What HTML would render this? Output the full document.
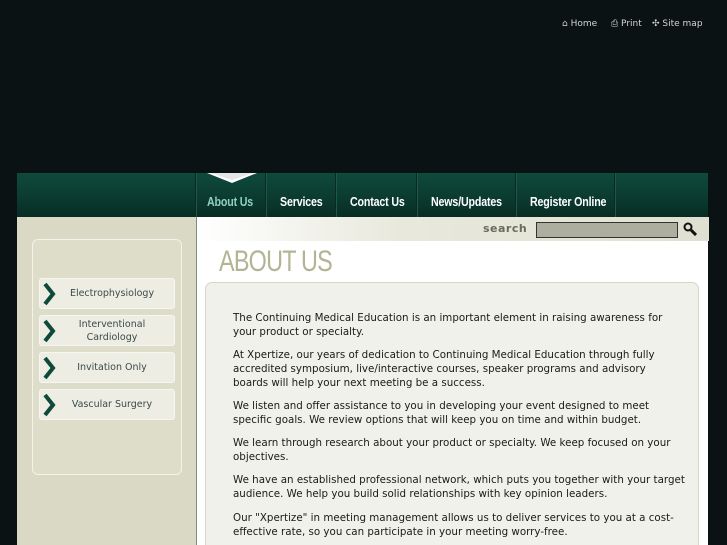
<!DOCTYPE html>
<html><head><style>
*{margin:0;padding:0;box-sizing:border-box}
html,body{width:727px;height:545px;overflow:hidden}
body{background:#0b1213;position:relative;font-family:"DejaVu Sans",sans-serif}
.top{position:absolute;top:19px;font-size:9px;color:#cfd6d4}
.nav{position:absolute;left:17px;top:173px;width:691px;height:44px;background:linear-gradient(#0f4a3c,#0b3a2f 60%,#082c24)}
.nav a{position:absolute;top:21px;font-family:"Liberation Sans",sans-serif;font-weight:bold;font-size:13px;color:#fff;letter-spacing:-0.2px;transform:scaleX(0.82);transform-origin:left}
.sep{position:absolute;top:0;width:1px;height:44px;background:#0a2a22;box-shadow:1px 0 0 #1d5848}
.side{position:absolute;left:17px;top:217px;width:179px;height:328px;background:#d9d9c6}
.sbox{position:absolute;left:32px;top:239px;width:150px;height:236px;border:1px solid #f3f3ea;border-radius:6px;background:#deddca}
.item{position:absolute;left:39px;width:136px;height:31px;background:#eeede4;border:1px solid #f6f6f0;border-radius:3px;font-size:9.5px;color:#3a4a48;text-align:center;display:flex;align-items:center;justify-content:center;line-height:13px;padding-left:10px}
.item svg{position:absolute;left:2px;top:3px}
.main{position:absolute;left:196px;top:217px;width:512px;height:328px;background:#fff;border-left:1px solid #7a8e85}
.sbar{position:absolute;left:0;top:0;width:512px;height:24px;background:linear-gradient(90deg,#fff,#e8e8dc 40%,#e0e0d2)}
.sinput{position:absolute;left:339px;top:5px;width:142px;height:16px;background:#adaea0;border:1px solid #333}
.content{position:absolute;left:205px;top:282px;width:494px;height:270px;background:#f1f1eb;border:1px solid #d6d6ca;border-radius:7px}
.content p{position:absolute;left:27px;width:455px;font-size:10.3px;line-height:14px;color:#1a1a1a}
</style></head><body>
<div class="top" style="left:562px">⌂ Home</div>
<div class="top" style="left:611px">⎙ Print</div>
<div class="top" style="left:652px">✣ Site map</div>
<div class="nav">
<svg style="position:absolute;left:190px;top:0" width="50" height="11"><polygon points="0,0 50,0 25,10" fill="#fff"/><polygon points="4,0 46,0 25,7" fill="#e4e8e4"/></svg>
<div class="sep" style="left:178px"></div>
<a style="left:190px;color:#8fd0c0">About Us</a>
<div class="sep" style="left:248px"></div>
<a style="left:263px">Services</a>
<div class="sep" style="left:318px"></div>
<a style="left:333px">Contact Us</a>
<div class="sep" style="left:399px"></div>
<a style="left:414px">News/Updates</a>
<div class="sep" style="left:498px"></div>
<a style="left:513px">Register Online</a>
<div class="sep" style="left:597px"></div>
</div>
<div class="side"></div>
<div class="sbox"></div>
<div class="item" style="top:278px">Electrophysiology<svg width="14" height="24"><path d="M3 2 L11 12 L3 22" stroke="#0d4a3a" stroke-width="4" fill="none"/></svg></div>
<div class="item" style="top:315px">Interventional<br>Cardiology<svg width="14" height="24"><path d="M3 2 L11 12 L3 22" stroke="#0d4a3a" stroke-width="4" fill="none"/></svg></div>
<div class="item" style="top:352px">Invitation Only<svg width="14" height="24"><path d="M3 2 L11 12 L3 22" stroke="#0d4a3a" stroke-width="4" fill="none"/></svg></div>
<div class="item" style="top:389px">Vascular Surgery<svg width="14" height="24"><path d="M3 2 L11 12 L3 22" stroke="#0d4a3a" stroke-width="4" fill="none"/></svg></div>
<div class="main"><div class="sbar">
<span style="position:absolute;left:286px;top:5px;font-size:11px;font-weight:bold;color:#6a6a60;letter-spacing:0.5px">search</span>
<div class="sinput"></div>
<svg style="position:absolute;left:486px;top:5px" width="14" height="14"><circle cx="5" cy="5" r="3.5" stroke="#111" stroke-width="2" fill="none"/><path d="M8 8 L13 13" stroke="#111" stroke-width="3"/></svg>
</div>
<div style="position:absolute;left:22px;top:28px;font-family:'Liberation Sans',sans-serif;font-size:30px;color:#b4b494;letter-spacing:-1px;transform:scaleX(0.78);transform-origin:left">ABOUT US</div>
</div>
<div class="content">
<p style="top:28px">The Continuing Medical Education is an important element in raising awareness for your product or specialty.</p>
<p style="top:65px">At Xpertize, our years of dedication to Continuing Medical Education through fully accredited symposium, live/interactive courses, speaker programs and advisory<br>boards will help your next meeting be a success.</p>
<p style="top:116px">We listen and offer assistance to you in developing your event designed to meet specific goals. We review options that will keep you on time and within budget.</p>
<p style="top:153px">We learn through research about your product or specialty. We keep focused on your objectives.</p>
<p style="top:190px">We have an established professional network, which puts you together with your target audience. We help you build solid relationships with key opinion leaders.</p>
<p style="top:228px">Our "Xpertize" in meeting management allows us to deliver services to you at a cost-effective rate, so you can participate in your meeting worry-free.</p>
</div>
</body></html>
